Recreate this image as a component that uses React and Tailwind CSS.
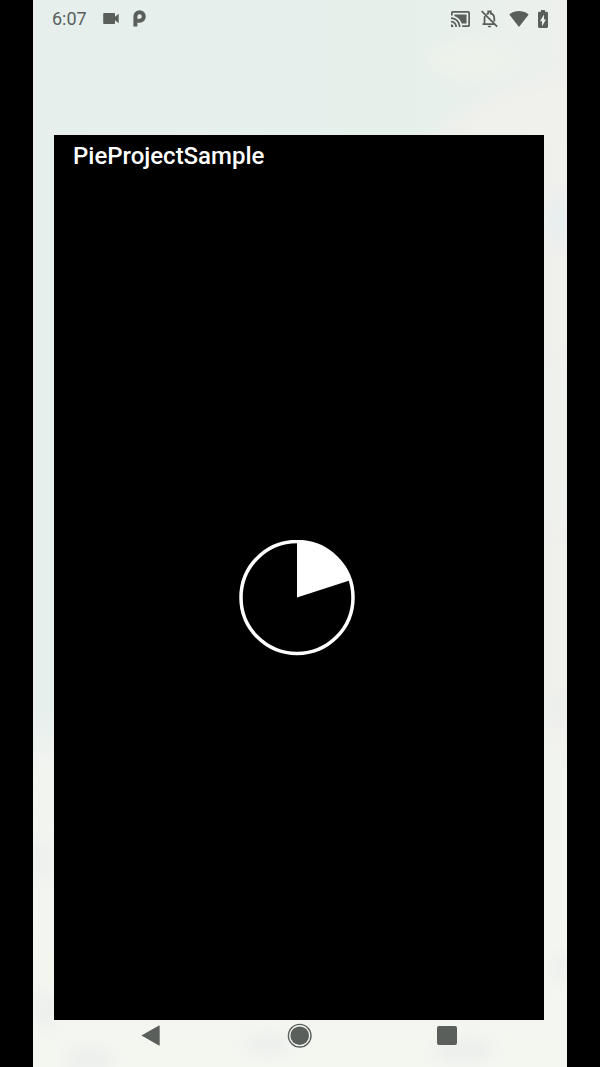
function StatusBar() {
  return (
    <header className="flex h-[37px] shrink-0 items-center pl-[19px] pr-[19px] text-[#5a5f5c]">
      <span className="w-[51px] text-[18px] leading-[37px]">6:07</span>
      <svg className="h-[11px] w-[16px]" viewBox="0 0 16 11" fill="currentColor">
        <path d="M1 0h10.2q.8 0 .8.800v3L15.700.700v9.600L12 7.200v3q0 .800-.8.800H1q-.8 0-.8-.8V.8Q.2 0 1 0z" />
      </svg>
      <svg className="ml-[14px] h-[17px] w-[13px]" viewBox="0 0 13 17" fill="none" stroke="currentColor" strokeWidth="4">
        <path d="M2.400 16.500V6.500A4.200 4.200 0 1 1 6.600 10.700H4.500" />
      </svg>
      <div className="ml-auto flex items-center">
        <svg className="h-[16px] w-[19px]" viewBox="1 3 22 18" preserveAspectRatio="none" fill="currentColor">
          <path d="M1 18v3h3c0-1.660-1.340-3-3-3zm0-4v2c2.760 0 5 2.240 5 5h2c0-3.870-3.130-7-7-7zm18-7H5v1.630c3.960 1.280 7.090 4.410 8.370 8.370H19V7zM1 10v2c4.970 0 9 4.030 9 9h2c0-6.080-4.930-11-11-11zm20-7H3c-1.100 0-2 .9-2 2v3h2V5h18v14h-7v2h7c1.100 0 2-.9 2-2V5c0-1.100-.9-2-2-2z" />
        </svg>
        <svg className="ml-[11px] h-[18px] w-[17px]" viewBox="0 0 17 18" fill="none" stroke="currentColor" strokeWidth="1.800">
          <path d="M.7 1.200 16.200 16.700M4 6.200Q3.500 7.200 3.500 8.500v5M1.500 14.200h11M5.600 4.300Q6.400 3.700 7.200 3.500V1.500h2.600v2q3.500.800 3.500 5v3" />
          <path d="M6.700 15.700h3.600a1.800 1.800 0 0 1-3.600 0z" fill="currentColor" stroke="none" />
        </svg>
        <svg className="ml-[11px] h-[16px] w-[20px]" viewBox="0 3 24 18.500" preserveAspectRatio="none" fill="currentColor">
          <path d="M12.010 21.490 23.640 7c-.45-.34-4.930-4-11.640-4C5.280 3 .81 6.660.36 7l11.630 14.490.01.010.01-.010z" />
        </svg>
        <svg className="ml-[9px] h-[18px] w-[10px]" viewBox="7 2 10 20" preserveAspectRatio="none" fill="currentColor">
          <path d="M15.670 4H14V2h-4v2H8.330C7.600 4 7 4.600 7 5.330v15.330C7 21.400 7.600 22 8.330 22h7.330c.74 0 1.340-.6 1.340-1.330V5.330C17 4.600 16.400 4 15.670 4zM11 20v-5.500H9L13 7v5.500h2L11 20z" />
        </svg>
      </div>
    </header>
  );
}

function ProgressPie() {
  return (
    <svg className="mr-[5px] size-[116px]" viewBox="0 0 116 116">
      <circle cx="58" cy="57.500" r="56" fill="none" stroke="white" strokeWidth="3.500" />
      <path d="M58 57.500V1.500A56 56 0 0 1 111.260 40.200z" fill="white" />
    </svg>
  );
}

function NavigationBar() {
  return (
    <nav className="flex h-[47px] shrink-0 items-start pl-[108px] pt-[3px] text-[#5a5f5c]">
      <svg className="mt-[2px] h-[21px] w-[19px]" viewBox="0 0 19 21" fill="currentColor">
        <path d="M.4 10.500 18 .6q.7-.2.7.5v18.800q0 .7-.7.5z" />
      </svg>
      <svg className="ml-[127px] size-[25px]" viewBox="0 0 25 25">
        <circle cx="12.700" cy="12.700" r="11.300" fill="none" stroke="currentColor" strokeWidth="1.400" />
        <circle cx="12.700" cy="12.700" r="9.300" fill="currentColor" />
      </svg>
      <div className="ml-[125px] mt-[3px] h-[19px] w-[20px] rounded-[2px] bg-[#5a5f5c]" />
    </nav>
  );
}

function Wallpaper() {
  return (
    <svg
      className="absolute inset-0 -z-10 h-full w-full"
      viewBox="0 0 534 1067"
      preserveAspectRatio="none"
      aria-hidden="true"
    >
      <defs>
        <linearGradient id="sky" x1="0" y1="0" x2="1" y2="0">
          <stop offset="0" stopColor="#e6efec" />
          <stop offset=".7" stopColor="#e6f0eb" />
          <stop offset="1" stopColor="#edf0ed" />
        </linearGradient>
        <linearGradient id="ground" x1="0" y1="0" x2="0" y2="1">
          <stop offset=".66" stopColor="#f2f4f0" stopOpacity="0" />
          <stop offset=".72" stopColor="#f2f4f0" />
          <stop offset="1" stopColor="#f4f6f0" />
        </linearGradient>
        <filter id="soft" x="-50%" y="-50%" width="200%" height="200%">
          <feGaussianBlur stdDeviation="7" />
        </filter>
      </defs>
      <rect width="534" height="1067" fill="url(#sky)" />
      <g filter="url(#soft)">
        <path d="M395 140 435 110 475 90 540 75V1067H510V140z" fill="#f0f0ec" />
        <ellipse cx="440" cy="60" rx="45" ry="20" fill="#edf2eb" />
        <ellipse cx="526" cy="220" rx="12" ry="28" fill="#e8eeee" />
        <ellipse cx="524" cy="445" rx="14" ry="100" fill="#eff1ed" />
      </g>
      <rect width="534" height="1067" fill="url(#ground)" />
      <g filter="url(#soft)" fill="#ecefec">
        <ellipse cx="8" cy="860" rx="8" ry="22" />
        <ellipse cx="12" cy="1010" rx="10" ry="18" />
        <ellipse cx="56" cy="1060" rx="24" ry="12" />
        <ellipse cx="235" cy="1044" rx="24" ry="10" />
        <ellipse cx="430" cy="1050" rx="30" ry="12" />
        <ellipse cx="526" cy="710" rx="10" ry="16" />
        <ellipse cx="528" cy="968" rx="8" ry="14" />
      </g>
    </svg>
  );
}

export default function App() {
  return (
    <div className="h-[1067px] w-[600px] overflow-hidden bg-black pl-[33px] font-['Roboto',sans-serif]">
      <div className="relative isolate flex h-full w-[534px] flex-col">
        <Wallpaper />
        <StatusBar />
        <main className="ml-[21px] mt-[98px] flex h-[885px] w-[490px] shrink-0 flex-col bg-black text-white">
          <h1 className="h-[42px] pl-[19px] text-[24px] font-medium leading-[42px] tracking-[-0.02px]">PieProjectSample</h1>
          <div className="flex flex-1 justify-center pt-[363px]">
            <ProgressPie />
          </div>
        </main>
        <NavigationBar />
      </div>
    </div>
  );
}
